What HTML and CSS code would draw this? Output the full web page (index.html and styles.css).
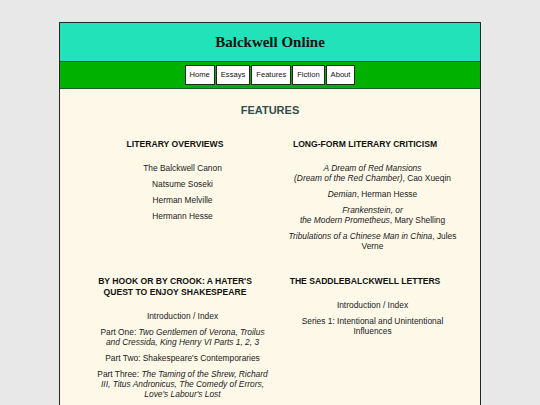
FILE: index.html
```html
<!DOCTYPE html>
<html>
<head>
<meta charset="utf-8">
<title>Balckwell Online</title>
<link rel="stylesheet" href="styles.css">
</head>
<body>
<div class="page">
  <header class="masthead">
    <h1 class="site-title">Balckwell Online</h1>
  </header>
  <nav class="nav">
    <a class="nav-btn" href="#">Home</a>
    <a class="nav-btn" href="#">Essays</a>
    <a class="nav-btn" href="#">Features</a>
    <a class="nav-btn" href="#">Fiction</a>
    <a class="nav-btn" href="#">About</a>
  </nav>
  <main class="content">
    <h2 class="page-title">FEATURES</h2>
    <div class="sections">
      <section class="section">
        <h3 class="section-title">LITERARY OVERVIEWS</h3>
        <ul class="links">
          <li>The Balckwell Canon</li>
          <li>Natsume Soseki</li>
          <li>Herman Melville</li>
          <li>Hermann Hesse</li>
        </ul>
      </section>
      <section class="section">
        <h3 class="section-title">LONG-FORM LITERARY CRITICISM</h3>
        <ul class="links">
          <li><i>A Dream of Red Mansions<br>(Dream of the Red Chamber)</i>, Cao Xueqin</li>
          <li><i>Demian</i>, Herman Hesse</li>
          <li><i>Frankenstein, or<br>the Modern Prometheus</i>, Mary Shelling</li>
          <li><i>Tribulations of a Chinese Man in China</i>, Jules Verne</li>
        </ul>
      </section>
      <section class="section">
        <h3 class="section-title">BY HOOK OR BY CROOK: A HATER'S QUEST TO ENJOY SHAKESPEARE</h3>
        <ul class="links">
          <li>Introduction / Index</li>
          <li>Part One: <i>Two Gentlemen of Verona, Troilus and Cressida, King Henry VI Parts 1, 2, 3</i></li>
          <li>Part Two: Shakespeare's Contemporaries</li>
          <li>Part Three: <i>The Taming of the Shrew, Richard III, Titus Andronicus, The Comedy of Errors, Love's Labour's Lost</i></li>
          <li>Part Four: <i>Romeo and Juliet, Julius Caesar</i></li>
        </ul>
      </section>
      <section class="section">
        <h3 class="section-title">THE SADDLEBALCKWELL LETTERS</h3>
        <ul class="links">
          <li>Introduction / Index</li>
          <li>Series 1: Intentional and Unintentional Influences</li>
        </ul>
      </section>
    </div>
  </main>
</div>
</body>
</html>
```
FILE: styles.css
```css
html, body {
  margin: 0;
  padding: 0;
  background: #e8e8e8;
}
body {
  font-family: "Liberation Sans", Arial, sans-serif;
  color: #222;
}
.page {
  width: 420px;
  margin: 22px auto 0;
  border: 1px solid #1f2a22;
  border-bottom: none;
  background: #fdf8e8;
}
.masthead {
  height: 38px;
  background: #21e2b8;
  border-bottom: 1px solid #155c2c;
  display: flex;
  align-items: center;
  justify-content: center;
}
.site-title {
  margin: 0;
  font-family: "Liberation Serif", "Times New Roman", serif;
  font-size: 15px;
  font-weight: bold;
  color: #111;
  line-height: 1;
}
.nav {
  background: #00b100;
  border-bottom: 1px solid #15602a;
  height: 26px;
  display: flex;
  align-items: center;
  justify-content: center;
  gap: 1px;
}
.nav-btn {
  display: block;
  background: #fff;
  border: 1px solid #1a2a1a;
  color: #111;
  text-decoration: none;
  font-size: 7.6px;
  line-height: 18px;
  padding: 0 4px;
}
.content {
  padding: 15px 22px 40px;
}
.page-title {
  margin: 0 0 22px;
  text-align: center;
  font-size: 11px;
  line-height: 13px;
  font-weight: bold;
  color: #2f4f4f;
}
.sections {
  display: grid;
  grid-template-columns: 186px 186px;
  column-gap: 4px;
  row-gap: 19px;
  align-items: start;
}
.section-title {
  margin: 0 0 13px;
  padding: 0 4px;
  text-align: center;
  font-size: 8.6px;
  line-height: 11px;
  font-weight: bold;
  color: #111;
}
.links {
  list-style: none;
  margin: 0;
  padding: 0 0 0 15px;
  text-align: center;
  font-size: 8.4px;
  line-height: 10px;
}
.links li {
  margin: 0 0 6px;
}
```
